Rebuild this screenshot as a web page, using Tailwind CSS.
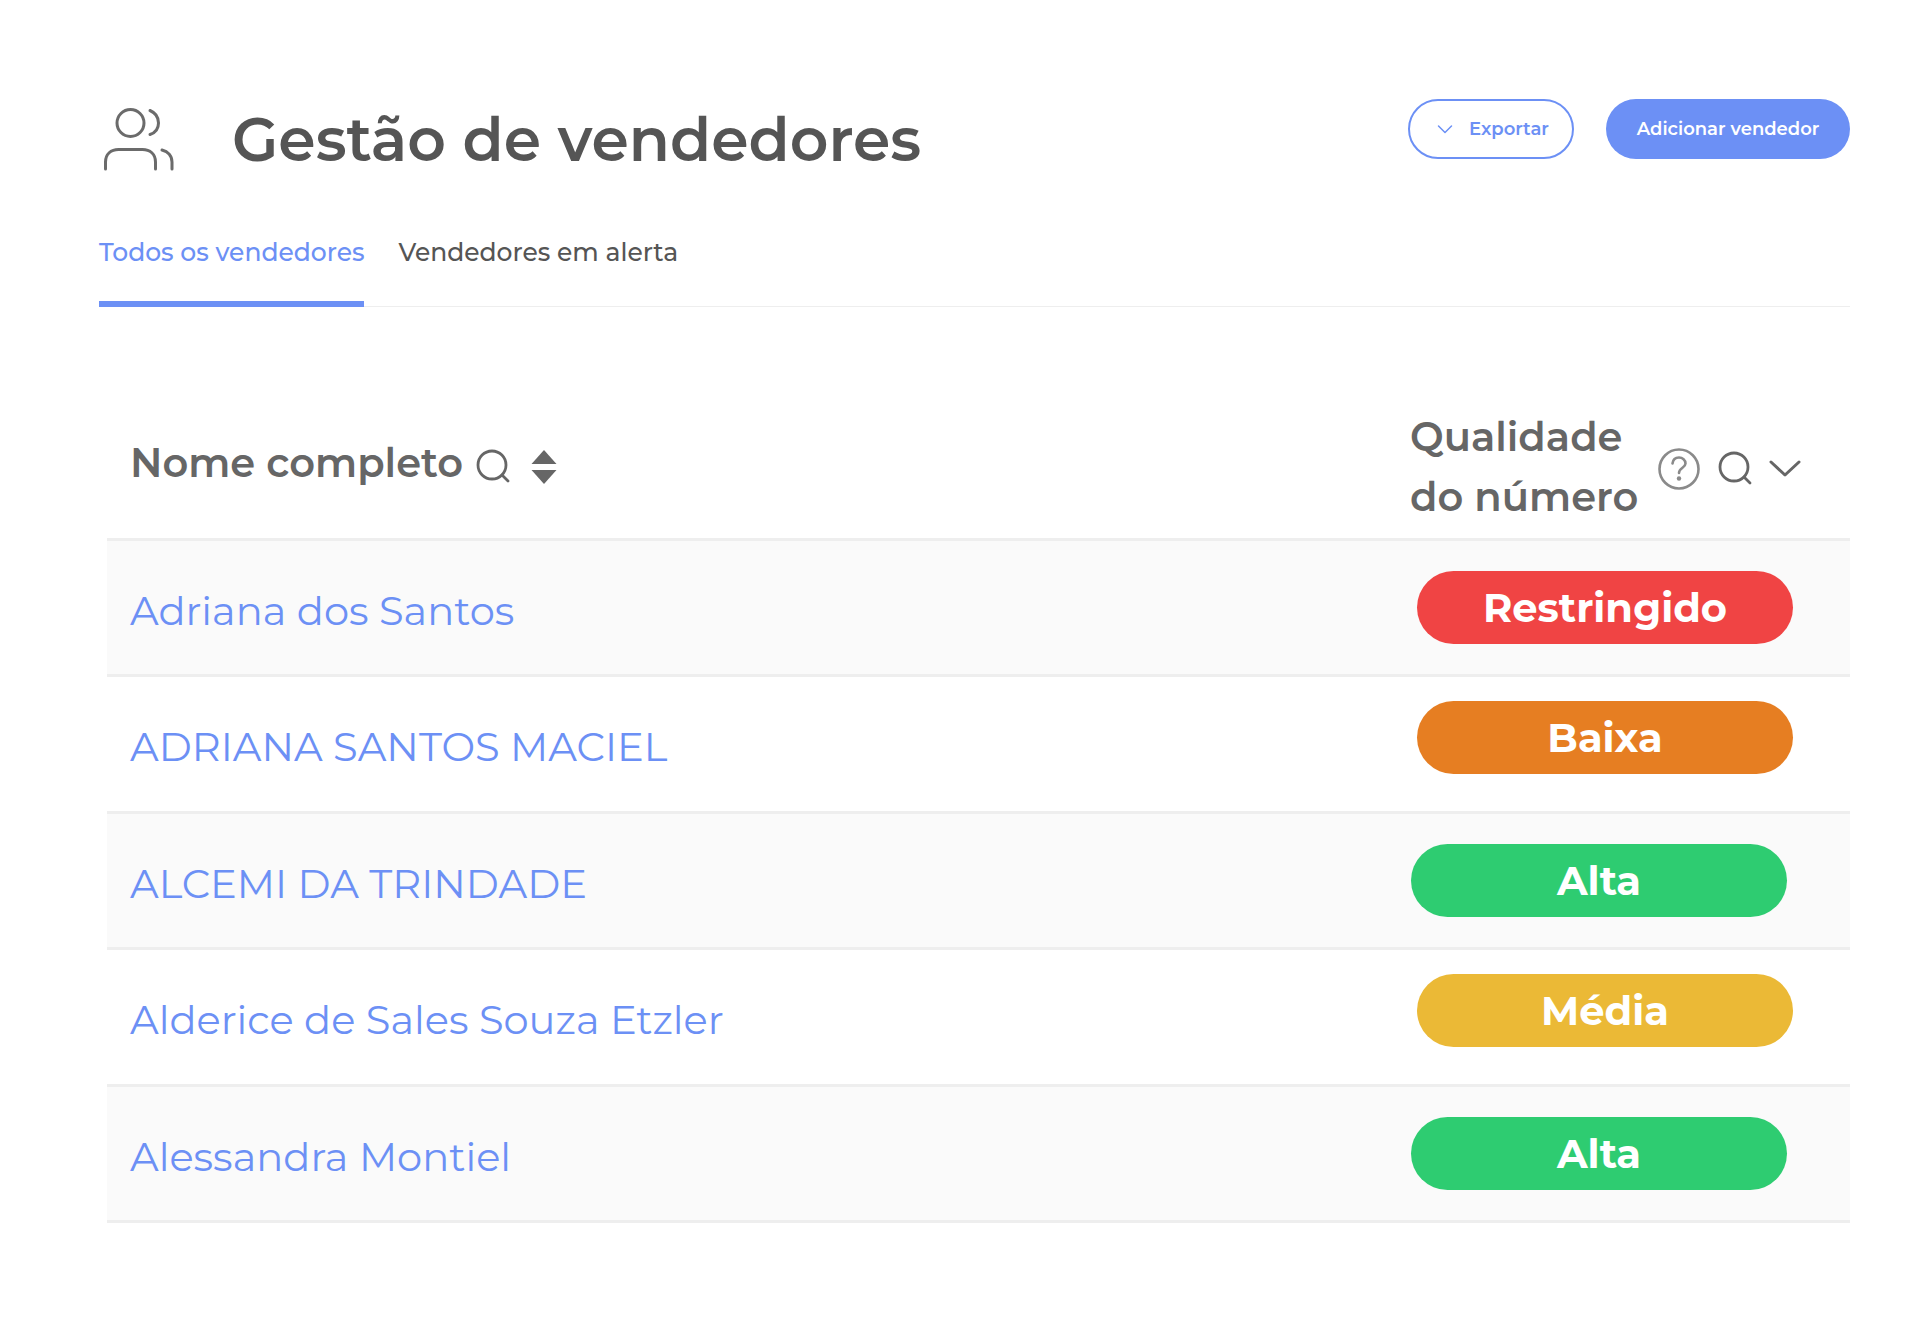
<!DOCTYPE html>
<html lang="pt-BR">
<head>
  <meta charset="UTF-8" />
  <meta name="viewport" content="width=device-width, initial-scale=1" />
  <title>Gestão de vendedores</title>
  <script src="https://cdn.jsdelivr.net/npm/@tailwindcss/browser@4"></script>
</head>
<body class="min-h-screen bg-white font-['Montserrat','Inter',sans-serif] text-[#555555]">
  <main class="pt-[99px] pr-[70px] pb-24 pl-[99px]">
    <header class="flex items-start justify-between">
      <div class="flex items-start gap-[53px]">
        <svg class="h-20 w-20" viewBox="0 0 80 80" fill="none" stroke="#6b6b6b" stroke-width="3" stroke-linecap="round" aria-hidden="true">
          <circle cx="31.5" cy="24" r="13.5" />
          <path d="M51 11.5C57 14 59.5 19 59.5 24C59.5 29 57 33.5 51 35.5" />
          <path d="M6.5 70V63C6.5 55 12 50.5 19.5 50.5H43.5C51 50.5 56.5 55 56.5 63V70" />
          <path d="M63 51C69 52.5 73 57 73 63V70" />
        </svg>
        <h1 class="text-[60px] leading-[82px] font-semibold">Gestão de vendedores</h1>
      </div>
      <div class="flex gap-8">
        <button type="button" class="flex h-[60px] w-[166px] items-center justify-center gap-4 rounded-full border-2 border-[#6c90f5] pl-1 text-[18px] font-semibold text-[#6c90f5]">
          <svg class="h-4 w-4" viewBox="0 0 16 16" fill="none" stroke="currentColor" stroke-width="1.5" stroke-linecap="round" stroke-linejoin="round" aria-hidden="true">
            <path d="M1.5 5L8 11.5L14.5 5" />
          </svg>
          Exportar
        </button>
        <button type="button" class="h-[60px] w-[244px] rounded-full bg-[#6c90f5] text-[18px] font-semibold text-white">Adicionar vendedor</button>
      </div>
    </header>

    <nav class="mt-[46px] flex gap-[34px] border-b border-[#eeeeee] text-[25px] leading-[50px] font-medium">
      <a href="#todos" class="-mb-px border-b-6 border-[#6c90f5] pb-6 text-[#6c90f5]">Todos os vendedores</a>
      <a href="#alerta" class="pb-6">Vendedores em alerta</a>
    </nav>

    <div class="mt-[87px] pl-2">
      <table class="w-full table-fixed border-separate border-spacing-0 text-left text-[40px] leading-[60px]">
        <thead class="text-[#666666]">
          <tr>
            <th scope="col" class="border-b-3 border-[#eeeeee] px-[23px] pt-[13px] pb-[11px] align-middle font-semibold">
              <div class="flex items-center">
                <span class="pb-2">Nome completo</span>
                <button type="button" aria-label="Buscar nome" class="ml-3">
                  <svg class="h-9 w-9" viewBox="0 0 36 36" fill="none" stroke="currentColor" stroke-width="2.8" stroke-linecap="round">
                    <circle cx="17" cy="16" r="14" />
                    <path d="M27 26L33 32" />
                  </svg>
                </button>
                <button type="button" aria-label="Ordenar por nome" class="ml-5">
                  <svg class="h-9 w-[26px]" viewBox="0 0 26 36" fill="currentColor">
                    <path d="M13 1L25.5 15H0.5Z" />
                    <path d="M13 35L25.5 21H0.5Z" />
                  </svg>
                </button>
              </div>
            </th>
            <th scope="col" class="w-[463px] border-b-3 border-[#eeeeee] pt-[13px] pb-[11px] pl-[23px] align-middle font-semibold">
              <div class="flex items-center">
                <span class="w-[248px]">Qualidade do número</span>
                <div class="flex items-center pt-1">
                  <button type="button" aria-label="Ajuda" class="text-[#8a8a8a]">
                    <svg class="h-[42px] w-[42px]" viewBox="0 0 42 42" fill="none" stroke="currentColor" stroke-width="2.6" stroke-linecap="round">
                      <circle cx="21" cy="21" r="19.5" />
                      <path d="M14.5 15.5C15 11.5 17.5 9.5 21 9.5C24.5 9.5 27.5 12 27.5 15.5C27.5 20 21 19.5 21 25" />
                      <circle cx="21" cy="30.5" r="2.2" fill="currentColor" stroke="none" />
                    </svg>
                  </button>
                  <button type="button" aria-label="Buscar qualidade" class="ml-[17px]">
                    <svg class="h-9 w-9" viewBox="0 0 36 36" fill="none" stroke="currentColor" stroke-width="2.8" stroke-linecap="round">
                      <circle cx="17" cy="16" r="14" />
                      <path d="M27 26L33 32" />
                    </svg>
                  </button>
                  <button type="button" aria-label="Filtrar qualidade" class="ml-4">
                    <svg class="h-8 w-8" viewBox="0 0 32 32" fill="none" stroke="currentColor" stroke-width="3" stroke-linecap="round" stroke-linejoin="round">
                      <path d="M2 9L16 22L30 9" />
                    </svg>
                  </button>
                </div>
              </div>
            </th>
          </tr>
        </thead>
        <tbody>
          <tr class="h-[136px] bg-[#fafafa]">
            <td class="border-b-3 border-[#eeeeee] px-[23px] pt-[6px] align-middle"><a href="#" class="text-[#6c90f5]">Adriana dos Santos</a></td>
            <td class="border-b-3 border-[#eeeeee] pt-[30px] pl-[30px] align-top"><span class="block h-[73px] w-[376px] rounded-full bg-[#f04444] text-center leading-[73px] font-bold text-white">Restringido</span></td>
          </tr>
          <tr class="h-[137px]">
            <td class="border-b-3 border-[#eeeeee] px-[23px] pt-[6px] align-middle"><a href="#" class="text-[#6c90f5]">ADRIANA SANTOS MACIEL</a></td>
            <td class="border-b-3 border-[#eeeeee] pt-6 pl-[30px] align-top"><span class="block h-[73px] w-[376px] rounded-full bg-[#e67e22] text-center leading-[73px] font-bold text-white">Baixa</span></td>
          </tr>
          <tr class="h-[136px] bg-[#fafafa]">
            <td class="border-b-3 border-[#eeeeee] px-[23px] pt-[6px] align-middle"><a href="#" class="text-[#6c90f5]">ALCEMI DA TRINDADE</a></td>
            <td class="border-b-3 border-[#eeeeee] pt-[30px] pl-6 align-top"><span class="block h-[73px] w-[376px] rounded-full bg-[#2ecc71] text-center leading-[73px] font-bold text-white">Alta</span></td>
          </tr>
          <tr class="h-[137px]">
            <td class="border-b-3 border-[#eeeeee] px-[23px] pt-[6px] align-middle"><a href="#" class="text-[#6c90f5]">Alderice de Sales Souza Etzler</a></td>
            <td class="border-b-3 border-[#eeeeee] pt-6 pl-[30px] align-top"><span class="block h-[73px] w-[376px] rounded-full bg-[#ebb936] text-center leading-[73px] font-bold text-white">Média</span></td>
          </tr>
          <tr class="h-[136px] bg-[#fafafa]">
            <td class="border-b-3 border-[#eeeeee] px-[23px] pt-[6px] align-middle"><a href="#" class="text-[#6c90f5]">Alessandra Montiel</a></td>
            <td class="border-b-3 border-[#eeeeee] pt-[30px] pl-6 align-top"><span class="block h-[73px] w-[376px] rounded-full bg-[#2ecc71] text-center leading-[73px] font-bold text-white">Alta</span></td>
          </tr>
        </tbody>
      </table>
    </div>
  </main>
</body>
</html>
